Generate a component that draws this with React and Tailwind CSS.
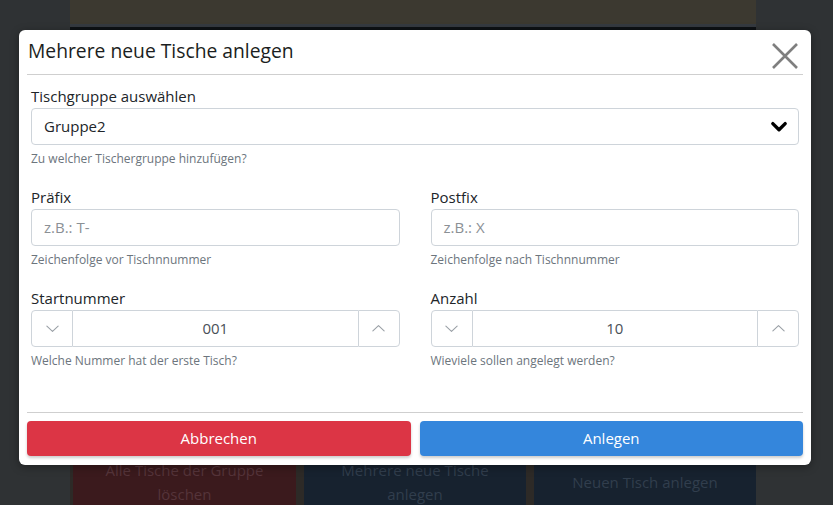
import React from "react";

const font = { fontFamily: '"Open Sans", "Noto Sans", sans-serif' };

function Chevron({ dir = "down", className = "" }) {
  return (
    <svg viewBox="0 0 16 16" className={className} fill="none" stroke="currentColor" strokeWidth="1.2" strokeLinecap="round" strokeLinejoin="round">
      {dir === "down" ? <path d="M2 5.5 L8 11 L14 5.5" /> : <path d="M2 10.5 L8 5 L14 10.5" />}
    </svg>
  );
}

function Field({ label, help, children }) {
  return (
    <div className="flex flex-col">
      <label className="text-[15px] leading-[22px] text-[#212529] mb-px">{label}</label>
      {children}
      <div className="text-[12px] leading-[18px] text-[#6c757d] mt-[5px]">{help}</div>
    </div>
  );
}

function TextInput({ placeholder }) {
  return (
    <div className="h-[37px] border border-[#ced4da] rounded-[4px] flex items-center px-3 text-[15px] text-[#8b9095]">
      {placeholder}
    </div>
  );
}

function Spinner({ value }) {
  return (
    <div className="flex h-[37px]">
      <div className="w-[42px] border border-[#ced4da] rounded-l-[4px] flex items-center justify-center text-[#9aa0a6]">
        <Chevron dir="down" className="w-[15px] h-[15px]" />
      </div>
      <div className="flex-1 border-y border-[#ced4da] flex items-center justify-center text-[15px] text-[#495057]">
        {value}
      </div>
      <div className="w-[42px] border border-[#ced4da] rounded-r-[4px] flex items-center justify-center text-[#9aa0a6]">
        <Chevron dir="up" className="w-[15px] h-[15px]" />
      </div>
    </div>
  );
}

export default function App() {
  return (
    <div className="relative w-[833px] h-[505px] overflow-hidden bg-[#2f3234]" style={font}>
      {/* background page */}
      <div className="ml-[70px] w-[686px] h-full flex flex-col bg-[#2b2926]">
        <div className="h-[24px] bg-[#3c3930]" />
        <div className="h-[3px] bg-[#353a40]" />
        <div className="flex-1 bg-[#0d1115]" />
        <div className="h-[50px] flex gap-[8px] pl-[3px] bg-[#2d2a27]">
          <div className="w-[223px] bg-[#3b1a1d] text-[#55343a] text-[15px] leading-[24px] text-center pt-[3px]">
            Alle Tische der Gruppe<br />löschen
          </div>
          <div className="w-[222px] bg-[#17222f] text-[#313e4d] text-[15px] leading-[24px] text-center pt-[3px]">
            Mehrere neue Tische<br />anlegen
          </div>
          <div className="w-[222px] bg-[#17222f] text-[#313e4d] text-[15px] leading-[24px] text-center pt-[15px]">
            Neuen Tisch anlegen
          </div>
        </div>
      </div>

      {/* modal */}
      <div className="absolute left-[19px] top-[30px] w-[792px] bg-white rounded-[6px] shadow-[0_2px_8px_rgba(0,0,0,0.35)]">
        <div className="mx-2 h-[45px] border-b border-[#cfcfcf] flex items-center justify-between">
          <div className="pl-px text-[19.3px] font-medium text-[#1b1e21] leading-[24px] -mt-[2px]">Mehrere neue Tische anlegen</div>
          <svg viewBox="0 0 28 28" className="w-[28px] h-[28px] mr-[4px] mt-[8px] text-[#7f7f7f]" fill="none" stroke="currentColor" strokeWidth="2.6">
            <path d="M2 2 L26 26 M26 2 L2 26" />
          </svg>
        </div>

        <div className="px-3 pt-[10px] pb-[42px] flex flex-col gap-[18px]">
          <Field label="Tischgruppe auswählen" help="Zu welcher Tischergruppe hinzufügen?">
            <div className="h-[37px] border border-[#ced4da] rounded-[4px] flex items-center justify-between pl-3 pr-[10px] text-[15px] text-[#212529]">
              <span>Gruppe2</span>
              <svg viewBox="0 0 16 16" className="w-[18px] h-[18px]" fill="none" stroke="#000" strokeWidth="3" strokeLinecap="round" strokeLinejoin="round">
                <path d="M2.5 5 L8 10.5 L13.5 5" />
              </svg>
            </div>
          </Field>
          <div className="grid grid-cols-2 gap-x-[31px]">
            <Field label="Präfix" help="Zeichenfolge vor Tischnnummer">
              <TextInput placeholder="z.B.: T-" />
            </Field>
            <Field label="Postfix" help="Zeichenfolge nach Tischnnummer">
              <TextInput placeholder="z.B.: X" />
            </Field>
          </div>
          <div className="grid grid-cols-2 gap-x-[31px]">
            <Field label="Startnummer" help="Welche Nummer hat der erste Tisch?">
              <Spinner value="001" />
            </Field>
            <Field label="Anzahl" help="Wieviele sollen angelegt werden?">
              <Spinner value="10" />
            </Field>
          </div>
        </div>

        <div className="mx-2 border-t border-[#cfcfcf] pt-[8px] pb-[9px] flex gap-[9px]">
          <button className="flex-1 h-[35px] rounded-[4px] bg-[#dc3545] text-white text-[15px] shadow-[0_2px_3px_rgba(0,0,0,0.2)]">Abbrechen</button>
          <button className="flex-1 h-[35px] rounded-[4px] bg-[#3486dc] text-white text-[15px] shadow-[0_2px_3px_rgba(0,0,0,0.2)]">Anlegen</button>
        </div>
      </div>
    </div>
  );
}
